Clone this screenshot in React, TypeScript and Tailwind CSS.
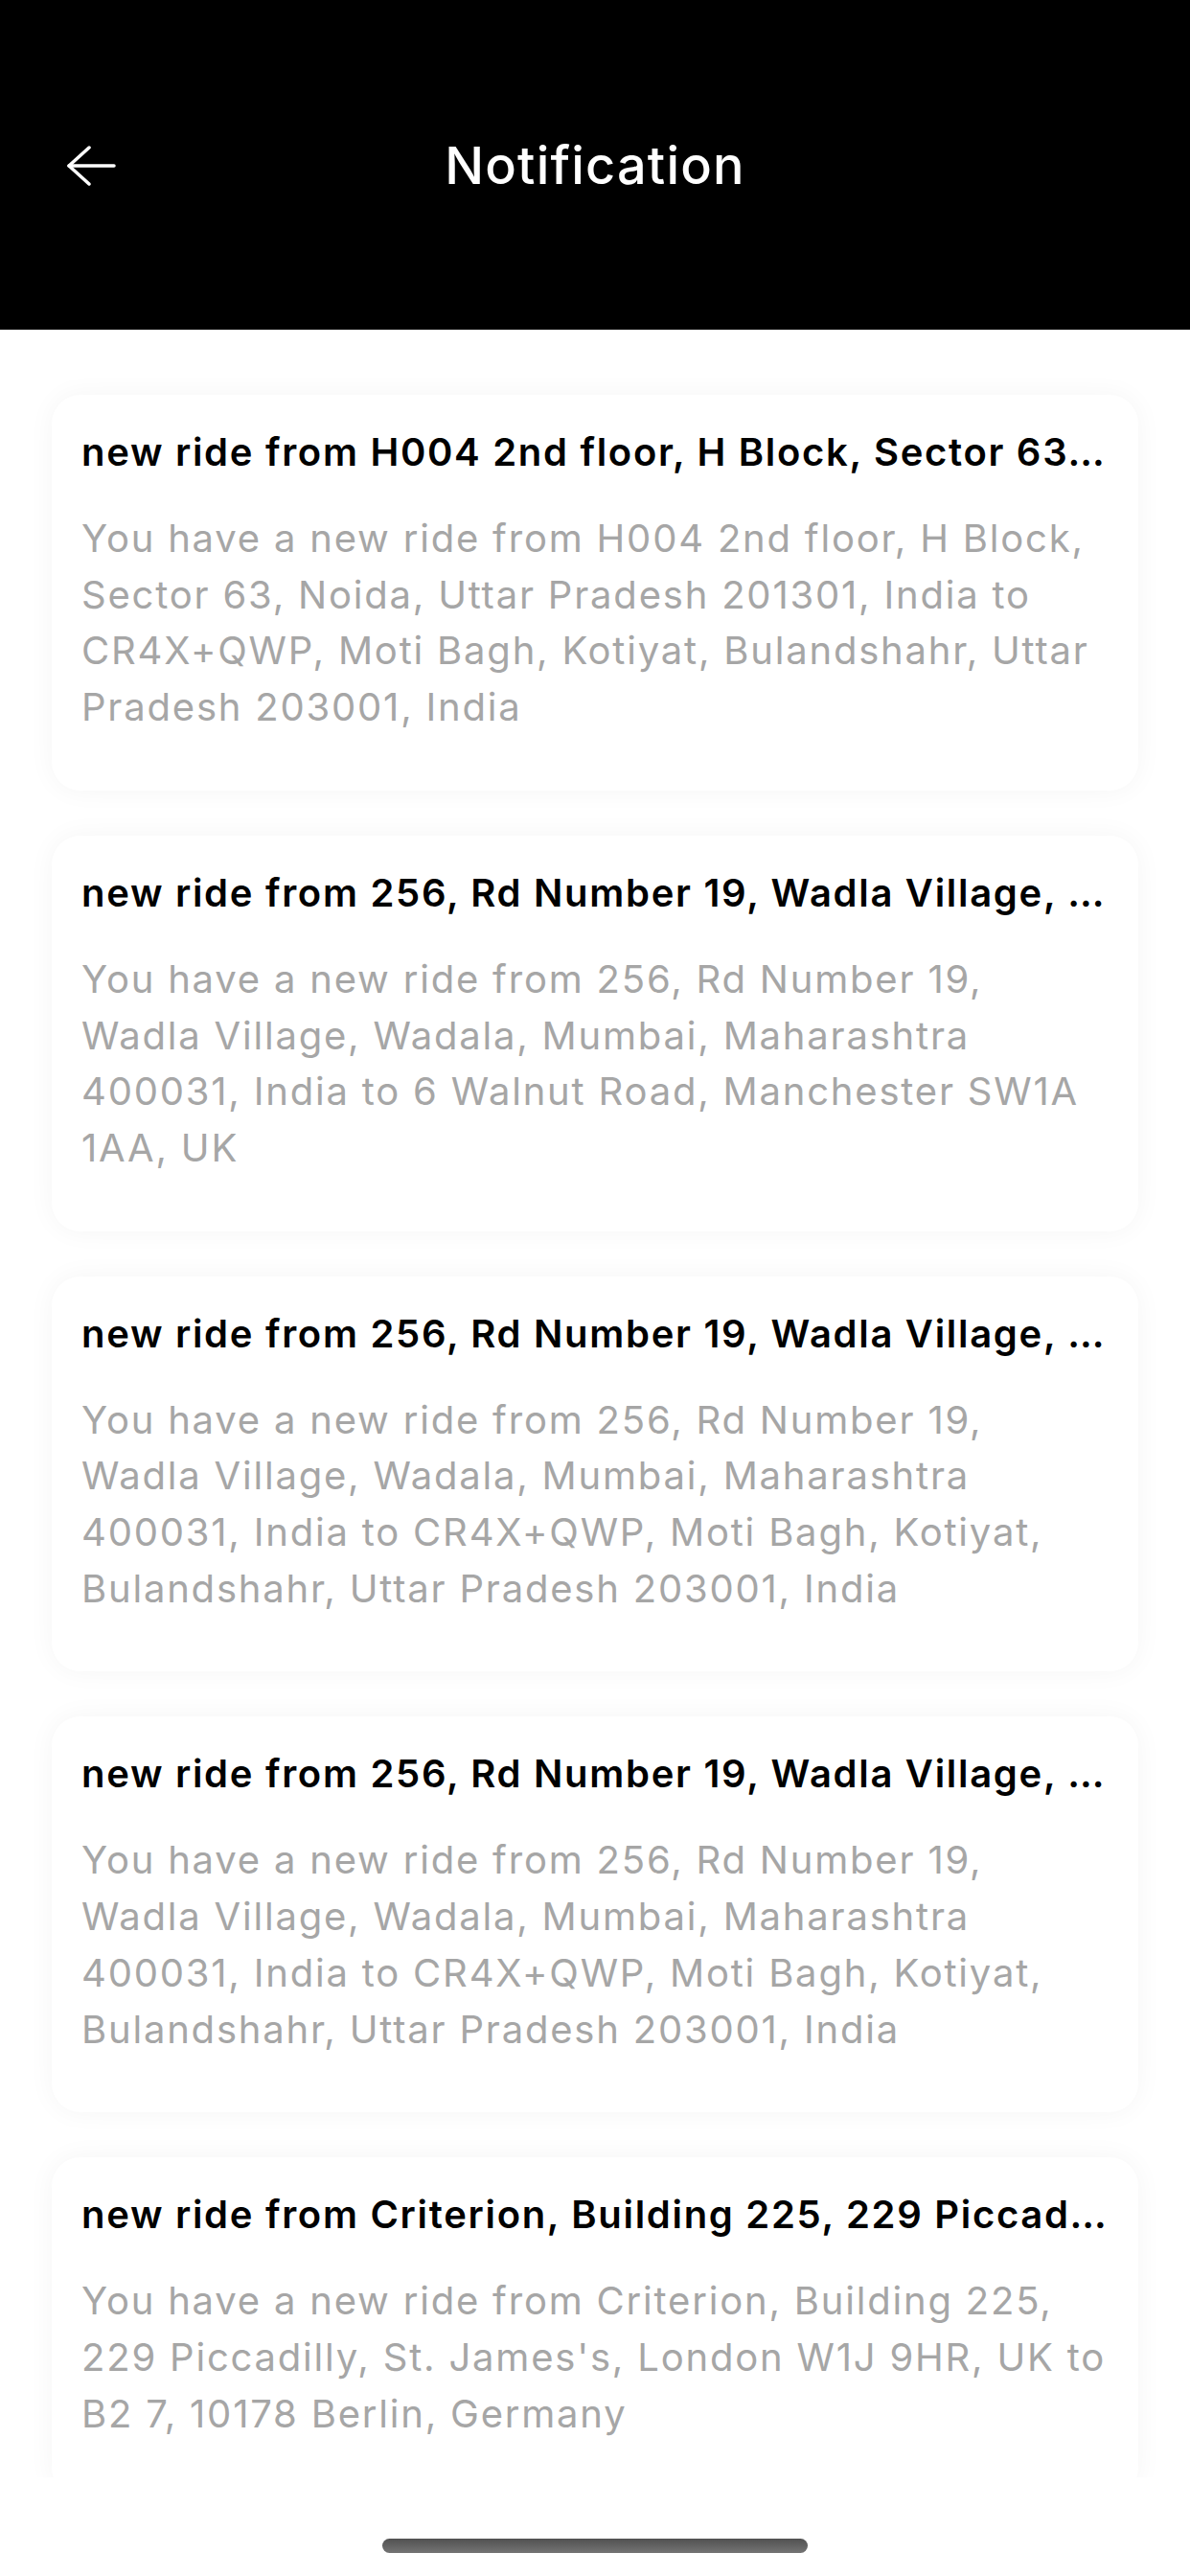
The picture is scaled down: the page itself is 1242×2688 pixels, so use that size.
import React from 'react';
import type { FC } from 'react';

interface NotificationItem {
  id: number;
  title: string;
  body: string;
}

const notifications: NotificationItem[] = [
  {
    id: 1,
    title: 'new ride from H004 2nd floor, H Block, Sector 63, Noida, Uttar Pradesh 201301, India',
    body: 'You have a new ride from H004 2nd floor, H Block, Sector 63, Noida, Uttar Pradesh 201301, India to CR4X+QWP, Moti Bagh, Kotiyat, Bulandshahr, Uttar Pradesh 203001, India',
  },
  {
    id: 2,
    title: 'new ride from 256, Rd Number 19, Wadla Village, Wadala, Mumbai, Maharashtra 400031, India',
    body: 'You have a new ride from 256, Rd Number 19, Wadla Village, Wadala, Mumbai, Maharashtra 400031, India to 6 Walnut Road, Manchester SW1A 1AA, UK',
  },
  {
    id: 3,
    title: 'new ride from 256, Rd Number 19, Wadla Village, Wadala, Mumbai, Maharashtra 400031, India',
    body: 'You have a new ride from 256, Rd Number 19, Wadla Village, Wadala, Mumbai, Maharashtra 400031, India to CR4X+QWP, Moti Bagh, Kotiyat, Bulandshahr, Uttar Pradesh 203001, India',
  },
  {
    id: 4,
    title: 'new ride from 256, Rd Number 19, Wadla Village, Wadala, Mumbai, Maharashtra 400031, India',
    body: 'You have a new ride from 256, Rd Number 19, Wadla Village, Wadala, Mumbai, Maharashtra 400031, India to CR4X+QWP, Moti Bagh, Kotiyat, Bulandshahr, Uttar Pradesh 203001, India',
  },
  {
    id: 5,
    title: "new ride from Criterion, Building 225, 229 Piccadilly, St. James's, London W1J 9HR, UK",
    body: "You have a new ride from Criterion, Building 225, 229 Piccadilly, St. James's, London W1J 9HR, UK to B2 7, 10178 Berlin, Germany",
  },
];

const BackArrow: FC = () => (
  <svg width="52" height="42" viewBox="0 0 52 42" fill="none" stroke="currentColor" strokeWidth="3.5" strokeLinecap="round" strokeLinejoin="round">
    <path d="M24 2 L3 21 L24 40" />
    <path d="M3 21 H50" />
  </svg>
);

const NotificationCard: FC<{ item: NotificationItem }> = ({ item }) => (
  <div className="shrink-0 rounded-[30px] bg-white px-[31px] pt-[31px] pb-[57px] shadow-[0_0_28px_rgba(0,0,0,0.045)]">
    <h3 className="truncate text-[40px] leading-[58px] font-semibold tracking-[1.7px] text-black">{item.title}</h3>
    <p className="mt-[32px] text-[40px] leading-[58.7px] tracking-[1.8px] text-[#a6a6a6]">{item.body}</p>
  </div>
);

const App: FC = () => {
  return (
    <div
      className="relative flex h-[2688px] w-[1242px] flex-col overflow-hidden bg-white"
      style={{ fontFamily: 'Inter, "Noto Sans", sans-serif' }}
    >
      <header className="relative flex h-[344px] shrink-0 items-center justify-center bg-black">
        <button className="absolute left-[69px] top-[152px] text-white">
          <BackArrow />
        </button>
        <h1 className="text-[54px] font-medium tracking-[1.2px] text-white">Notification</h1>
      </header>

      <div className="flex h-[2241px] shrink-0 flex-col gap-[47px] overflow-hidden px-[54px] pt-[68px]">
        {notifications.map((n) => (
          <NotificationCard key={n.id} item={n} />
        ))}
      </div>

      <div className="flex flex-1 justify-center pt-[64px]">
        <div className="h-[15px] w-[444px] rounded-full bg-gradient-to-b from-[#515151] to-[#747474]" />
      </div>
    </div>
  );
};

export default App;
